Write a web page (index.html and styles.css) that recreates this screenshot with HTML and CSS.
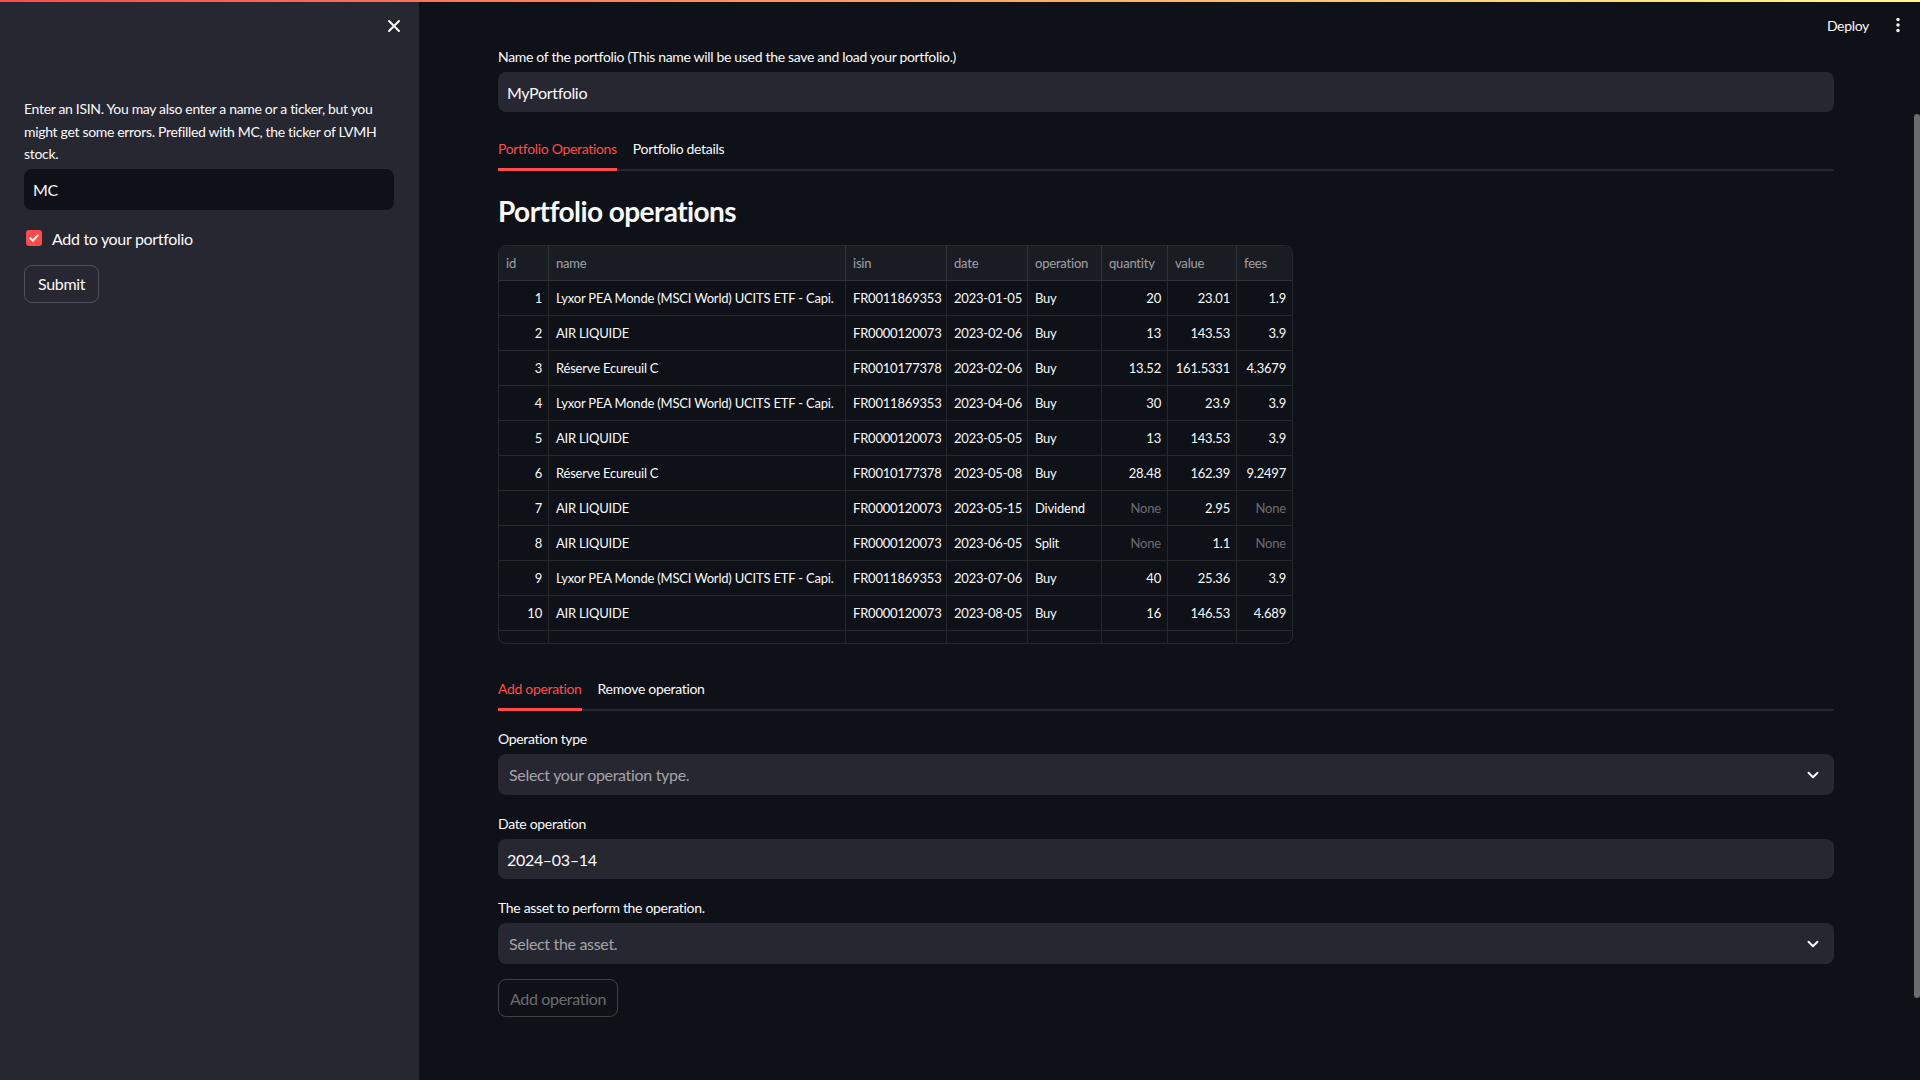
FILE: index.html
```html
<!DOCTYPE html>
<html lang="en">
<head>
<meta charset="utf-8">
<title>Portfolio</title>
<link rel="stylesheet" href="styles.css">
</head>
<body>
<div class="decoration"></div>
<div class="app">
  <aside class="sidebar">
    <div class="sidebar-head">
      <button class="close-btn" aria-label="Close sidebar">
        <svg width="14" height="14" viewBox="0 0 14 14"><path d="M2 2 L12 12 M12 2 L2 12" stroke="#fafafa" stroke-width="2" stroke-linecap="round"/></svg>
      </button>
    </div>
    <div class="sidebar-body">
      <p class="help">Enter an ISIN. You may also enter a name or a ticker, but you might get some errors. Prefilled with MC, the ticker of LVMH stock.</p>
      <div class="text-input dark">MC</div>
      <label class="check-row">
        <span class="checkbox">
          <svg width="12" height="12" viewBox="0 0 12 12"><path d="M2.2 6.2 L4.8 8.8 L9.8 3.4" fill="none" stroke="#fff" stroke-width="2" stroke-linecap="round" stroke-linejoin="round"/></svg>
        </span>
        <span class="check-label">Add to your portfolio</span>
      </label>
      <button class="btn">Submit</button>
    </div>
  </aside>

  <main class="main">
    <header class="topbar">
      <span class="deploy">Deploy</span>
      <svg class="kebab" width="6" height="16" viewBox="0 0 6 16"><circle cx="3" cy="2.5" r="1.7" fill="#fafafa"/><circle cx="3" cy="8" r="1.7" fill="#fafafa"/><circle cx="3" cy="13.5" r="1.7" fill="#fafafa"/></svg>
    </header>

    <div class="block">
      <div class="label">Name of the portfolio (This name will be used the save and load your portfolio.)</div>
      <div class="text-input">MyPortfolio</div>

      <div class="tabs tabs-top">
        <span class="tab active">Portfolio Operations</span>
        <span class="tab">Portfolio details</span>
      </div>

      <h3 class="heading">Portfolio operations</h3>

      <div class="table-wrap">
        <table class="grid">
          <colgroup>
            <col style="width:50px"><col style="width:297px"><col style="width:101px"><col style="width:81px"><col style="width:74px"><col style="width:66px"><col style="width:69px"><col style="width:55px">
          </colgroup>
          <thead>
            <tr><th>id</th><th>name</th><th>isin</th><th>date</th><th>operation</th><th>quantity</th><th>value</th><th>fees</th></tr>
          </thead>
          <tbody>
            <tr><td class="num">1</td><td>Lyxor PEA Monde (MSCI World) UCITS ETF - Capi.</td><td>FR0011869353</td><td>2023-01-05</td><td>Buy</td><td class="num">20</td><td class="num">23.01</td><td class="num">1.9</td></tr>
            <tr><td class="num">2</td><td>AIR LIQUIDE</td><td>FR0000120073</td><td>2023-02-06</td><td>Buy</td><td class="num">13</td><td class="num">143.53</td><td class="num">3.9</td></tr>
            <tr><td class="num">3</td><td>Réserve Ecureuil C</td><td>FR0010177378</td><td>2023-02-06</td><td>Buy</td><td class="num">13.52</td><td class="num">161.5331</td><td class="num">4.3679</td></tr>
            <tr><td class="num">4</td><td>Lyxor PEA Monde (MSCI World) UCITS ETF - Capi.</td><td>FR0011869353</td><td>2023-04-06</td><td>Buy</td><td class="num">30</td><td class="num">23.9</td><td class="num">3.9</td></tr>
            <tr><td class="num">5</td><td>AIR LIQUIDE</td><td>FR0000120073</td><td>2023-05-05</td><td>Buy</td><td class="num">13</td><td class="num">143.53</td><td class="num">3.9</td></tr>
            <tr><td class="num">6</td><td>Réserve Ecureuil C</td><td>FR0010177378</td><td>2023-05-08</td><td>Buy</td><td class="num">28.48</td><td class="num">162.39</td><td class="num">9.2497</td></tr>
            <tr><td class="num">7</td><td>AIR LIQUIDE</td><td>FR0000120073</td><td>2023-05-15</td><td>Dividend</td><td class="num none">None</td><td class="num">2.95</td><td class="num none">None</td></tr>
            <tr><td class="num">8</td><td>AIR LIQUIDE</td><td>FR0000120073</td><td>2023-06-05</td><td>Split</td><td class="num none">None</td><td class="num">1.1</td><td class="num none">None</td></tr>
            <tr><td class="num">9</td><td>Lyxor PEA Monde (MSCI World) UCITS ETF - Capi.</td><td>FR0011869353</td><td>2023-07-06</td><td>Buy</td><td class="num">40</td><td class="num">25.36</td><td class="num">3.9</td></tr>
            <tr><td class="num">10</td><td>AIR LIQUIDE</td><td>FR0000120073</td><td>2023-08-05</td><td>Buy</td><td class="num">16</td><td class="num">146.53</td><td class="num">4.689</td></tr>
            <tr><td class="num">11</td><td>Réserve Ecureuil C</td><td>FR0010177378</td><td>2023-08-07</td><td>Sell</td><td class="num">10</td><td class="num">163.2</td><td class="num">0</td></tr>
          </tbody>
        </table>
      </div>

      <div class="tabs tabs-bottom">
        <span class="tab active">Add operation</span>
        <span class="tab">Remove operation</span>
      </div>

      <div class="field first">
        <div class="label">Operation type</div>
        <div class="select">
          <span class="placeholder">Select your operation type.</span>
          <svg class="chev" width="12" height="8" viewBox="0 0 12 8"><path d="M1.5 1.8 L6 6.2 L10.5 1.8" fill="none" stroke="#fafafa" stroke-width="2" stroke-linecap="round" stroke-linejoin="round"/></svg>
        </div>
      </div>

      <div class="field">
        <div class="label">Date operation</div>
        <div class="text-input date">2024–03–14</div>
      </div>

      <div class="field">
        <div class="label">The asset to perform the operation.</div>
        <div class="select">
          <span class="placeholder">Select the asset.</span>
          <svg class="chev" width="12" height="8" viewBox="0 0 12 8"><path d="M1.5 1.8 L6 6.2 L10.5 1.8" fill="none" stroke="#fafafa" stroke-width="2" stroke-linecap="round" stroke-linejoin="round"/></svg>
        </div>
      </div>

      <button class="btn disabled">Add operation</button>
    </div>

    <div class="scroll-thumb"></div>
  </main>
</div>
</body>
</html>
```

FILE: styles.css
```css
* { box-sizing: border-box; }

html, body {
  margin: 0;
  height: 100%;
}

body {
  background: #0e1117;
  color: #fafafa;
  font-family: "Source Sans Pro", Lato, "Noto Sans", sans-serif;
  letter-spacing: -0.02em;
  overflow: hidden;
}

.decoration {
  position: absolute;
  top: 0;
  left: 0;
  right: 0;
  height: 2px;
  background: linear-gradient(90deg, #ff4b4b, #fffd80);
  z-index: 10;
}

.app {
  display: flex;
  height: 1080px;
}

/* Sidebar */
.sidebar {
  width: 419px;
  flex: 0 0 419px;
  background: #262730;
  height: 100%;
}

.sidebar-head {
  height: 52px;
  display: flex;
  align-items: center;
  justify-content: flex-end;
  padding-right: 18px;
}

.close-btn {
  background: none;
  border: 0;
  padding: 0;
  width: 14px;
  height: 14px;
  display: flex;
  cursor: pointer;
}

.sidebar-body {
  padding: 46px 25px 0 24px;
}

.help {
  margin: 0 0 3px;
  font-size: 14px;
  line-height: 22.5px;
}

.text-input {
  height: 40px;
  border-radius: 8px;
  background: #262730;
  padding: 0 9px;
  display: flex;
  align-items: center;
  font-size: 16px;
  color: #fafafa;
}

.text-input.dark {
  background: #0e1117;
  height: 41px;
}

.check-row {
  display: flex;
  align-items: center;
  gap: 10px;
  margin-top: 17px;
  height: 22px;
  padding-left: 2px;
  font-size: 16px;
}

.checkbox {
  width: 16px;
  height: 16px;
  border-radius: 3px;
  background: #ff4b4b;
  display: flex;
  align-items: center;
  justify-content: center;
}

.check-label {
  line-height: 22px;
  padding-top: 2px;
}

.btn {
  margin-top: 16px;
  height: 38px;
  padding: 0 13px;
  border-radius: 8px;
  border: 1px solid rgba(250, 250, 250, 0.2);
  background: transparent;
  color: #fafafa;
  font-family: inherit;
  font-size: 16px;
  letter-spacing: -0.02em;
  white-space: nowrap;
  display: inline-flex;
  align-items: center;
}

/* Main */
.main {
  flex: 1;
  position: relative;
  height: 100%;
  overflow: hidden;
}

.topbar {
  position: absolute;
  top: 2px;
  right: 0;
  height: 46px;
  display: flex;
  align-items: center;
  padding-right: 19px;
}

.deploy {
  font-size: 14px;
  margin-right: 26px;
}

.kebab { display: block; }

.block {
  padding: 47px 86px 0 79px;
  display: flex;
  flex-direction: column;
  align-items: stretch;
}

.label {
  font-size: 14px;
  line-height: 20px;
  height: 20px;
  margin-bottom: 5px;
}

.tabs {
  display: flex;
  gap: 16px;
  box-shadow: inset 0 -2px 0 #262730;
  height: 41px;
}

.tabs-top { margin-top: 18px; }
.tabs-bottom { margin-top: 26px; }

.tab {
  font-size: 14px;
  line-height: 38px;
  height: 41px;
  border-bottom: 3px solid transparent;
  color: #fafafa;
}

.tab.active {
  color: #ff4b4b;
  border-bottom-color: #ff4b4b;
}

.heading {
  margin: 23px 0 17px;
  font-size: 28px;
  line-height: 34px;
  font-weight: 700;
  letter-spacing: -0.02em;
}

.table-wrap {
  width: 795px;
  height: 399px;
  border: 1px solid rgba(250, 250, 250, 0.1);
  border-radius: 8px;
  overflow: hidden;
}

.grid {
  border-collapse: separate;
  border-spacing: 0;
  table-layout: fixed;
  width: 793px;
  font-size: 13px;
  letter-spacing: -0.2px;
}

.grid th,
.grid td {
  height: 35px;
  padding: 0 6px 0 7px;
  border-right: 1px solid rgba(250, 250, 250, 0.1);
  border-bottom: 1px solid rgba(250, 250, 250, 0.1);
  white-space: nowrap;
  overflow: hidden;
  text-align: left;
  vertical-align: middle;
}

.grid th:last-child,
.grid td:last-child { border-right: 0; }

.grid th {
  background: #1a1c24;
  color: rgba(250, 250, 250, 0.6);
  font-weight: 400;
}

.grid td.num { text-align: right; }
.grid td.none { color: rgba(250, 250, 250, 0.4); }

.field { margin-top: 19px; }
.field.first { margin-top: 18px; }

.select {
  height: 41px;
  border-radius: 8px;
  background: #262730;
  display: flex;
  align-items: center;
  justify-content: space-between;
  padding: 0 15px 0 11px;
  font-size: 16px;
}

.placeholder { color: rgba(250, 250, 250, 0.6); }

.chev { display: block; }

.text-input.date { height: 40px; }

.btn.disabled {
  align-self: flex-start;
  color: rgba(250, 250, 250, 0.4);
  width: 120px;
  padding: 0;
  justify-content: center;
  margin-top: 15px;
}

.scroll-thumb {
  position: absolute;
  right: 0;
  top: 114px;
  width: 6px;
  height: 884px;
  border-radius: 3px;
  background: #6b6c70;
}
```
